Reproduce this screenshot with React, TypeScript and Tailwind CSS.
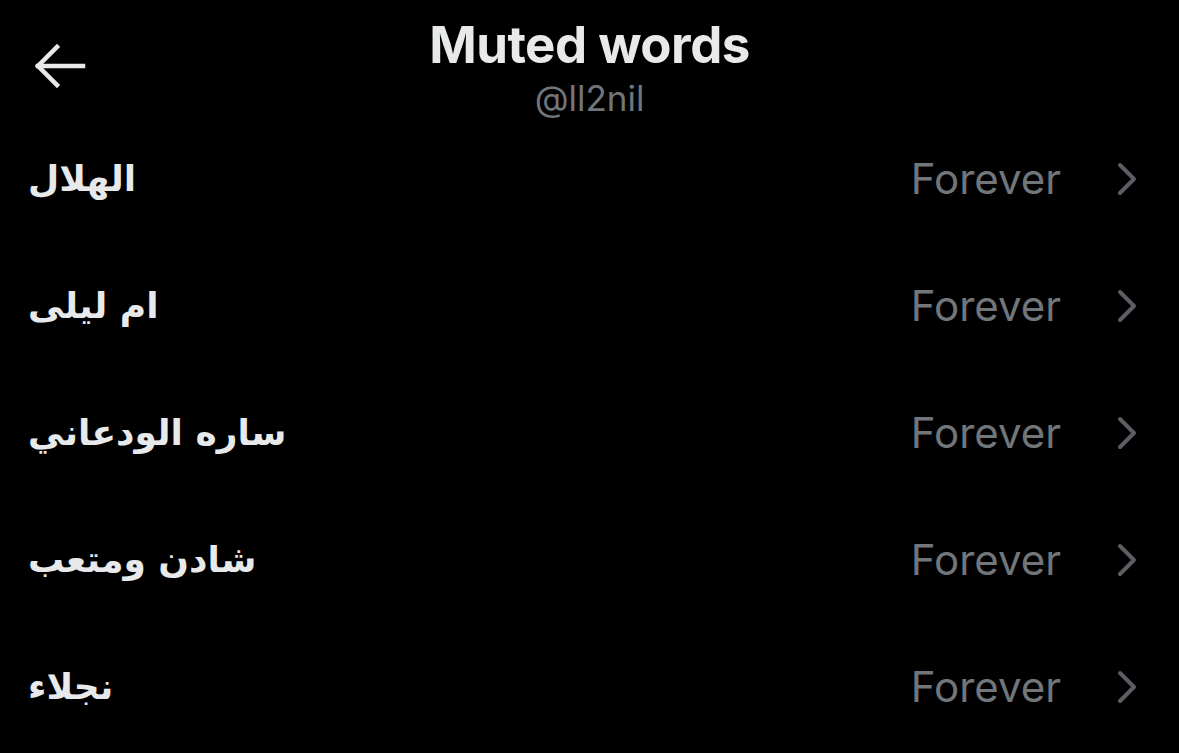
import React from 'react';

const words = ['الهلال', 'ام ليلى', 'ساره الودعاني', 'شادن ومتعب', 'نجلاء'];

function BackArrow() {
  return (
    <svg width="54" height="46" viewBox="0 0 54 46" fill="none" stroke="#e7e9ea" strokeWidth="4.5" strokeLinecap="square">
      <path d="M5 23 H50" />
      <path d="M24 4 L5 23 L24 42" strokeLinejoin="miter" />
    </svg>
  );
}

function Chevron() {
  return (
    <svg width="24" height="34" viewBox="0 0 24 34" fill="none" stroke="#5b5f63" strokeWidth="4" strokeLinecap="round" strokeLinejoin="round">
      <path d="M5 3 L19 17 L5 31" />
    </svg>
  );
}

export default function App() {
  return (
    <div className="w-[1179px] h-[753px] bg-black overflow-hidden text-[#e7e9ea]" style={{ fontFamily: 'Inter, "DejaVu Sans", sans-serif' }}>
      {/* Header */}
      <div className="relative h-[115px] flex flex-col items-center pt-[18px]">
        <div className="absolute left-[33px] top-[43px]">
          <BackArrow />
        </div>
        <h1 className="text-[51px] leading-[54px] font-bold tracking-[-0.5px]">Muted words</h1>
        <div className="text-[35px] leading-[40px] text-[#71767b] mt-[6px]">@ll2nil</div>
      </div>

      {/* Muted words list */}
      <div className="flex flex-col">
        {words.map((w) => (
          <div key={w} className="h-[127px] flex items-center pl-[28px] pr-[40px]">
            <div dir="rtl" className="flex-1 text-left text-[36px] font-bold" style={{ fontFamily: '"DejaVu Sans", sans-serif' }}>
              <span className="inline-block">{w}</span>
            </div>
            <span className="text-[42px] text-[#71767b] mr-[54px]">Forever</span>
            <Chevron />
          </div>
        ))}
      </div>
    </div>
  );
}
